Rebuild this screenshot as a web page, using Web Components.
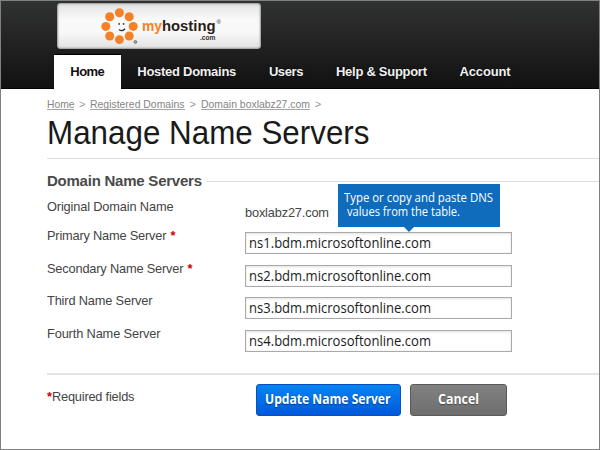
<!DOCTYPE html>
<html lang="en"><head><meta charset="utf-8"><title>Manage Name Servers</title>
<style>
html,body{margin:0;padding:0;background:#fff}
body{width:600px;height:450px;overflow:hidden;font-family:"Liberation Sans",Arial,sans-serif}
</style></head><body>
<hosting-app></hosting-app>
<script>
const define=(name,css,html,after)=>{
  const t=document.createElement('template');
  t.innerHTML=`<style>:host{display:block;box-sizing:border-box}*{box-sizing:border-box}${css}</style>${html}`;
  customElements.define(name,class extends HTMLElement{
    connectedCallback(){
      if(this.shadowRoot)return;
      this.attachShadow({mode:'open'}).append(t.content.cloneNode(true));
      if(after)after(this,this.shadowRoot);
    }
  });
};

/* Takes exactly the width in "w": by letter spacing, or by condensing the run if "condense" is set. */
define('fit-text',':host{display:inline-block;white-space:pre;flex:none}span{display:inline-block;white-space:pre;transform-origin:0 50%}','<span><slot></slot></span>',(el,root)=>{
  const s=root.querySelector('span'),w=+el.getAttribute('w'),nat=s.getBoundingClientRect().width;
  if(el.hasAttribute('condense'))s.style.transform=`scaleX(${w/nat})`;
  else s.style.letterSpacing=(w-nat)/(el.textContent.length-1)+'px';
  el.style.width=w+'px';
});

define('brand-logo',`:host{width:204px;height:46px;border-radius:3px;border:1px solid #aaa;background:linear-gradient(#e3e3e3,#f9f9f9 35%,#f8f8f8 65%,#e2e2e2);box-shadow:inset 0 0 2px #999;display:flex}
svg{margin:4px 0 0 43px;flex:none}
.word{font-weight:bold;font-size:15px;line-height:20px;margin:12px 0 0 3px;color:#2b1c17;white-space:nowrap;height:20px}
.my{color:#f58025}
.com{display:block;font-size:7px;line-height:8px;margin:-2px 0 0 58px;color:#333}
.r{font-size:6px;vertical-align:7px;font-weight:normal;margin-left:1px;line-height:0}`,
`<svg width="38" height="36" viewBox="0 0 38 36"><g fill="#f58025"><circle cx="18.4" cy="4.8" r="4.5"/><circle cx="28.2" cy="8.7" r="4.5"/><circle cx="32.2" cy="18.4" r="4.5"/><circle cx="28.2" cy="28" r="4.5"/><circle cx="18.4" cy="31.6" r="4.4"/><circle cx="8.7" cy="28" r="4.5"/><circle cx="4.8" cy="18.4" r="4.5"/><circle cx="8.7" cy="8.7" r="4.5"/></g><g fill="#333"><circle cx="18.2" cy="15.9" r=".9"/><circle cx="22.6" cy="15.9" r=".9"/></g><path d="M18 21.6q3 2.5 6-.9" fill="none" stroke="#333" stroke-width="1.3"/><circle cx="34.4" cy="34" r="1.4" fill="#aaa" stroke="#777"/></svg>
<div class="word"><fit-text condense class="my" w="20">my</fit-text><fit-text condense w="53.5">hosting</fit-text><span class="r">®</span><span class="com"><fit-text condense w="15.5">.com</fit-text></span></div>`);

define('nav-tab',`:host{height:34px;padding:0 16.3px;font-weight:bold;font-size:13px;line-height:34px;color:#f1f1f1;white-space:nowrap;text-shadow:0 0 2px #000}
:host([active]){background:#fff;color:#111;text-shadow:none;width:67px;box-shadow:0 -1px 0 #000}`,'<slot></slot>');

define('site-header',`:host{height:88px;padding:2px 0 0 56px;background:linear-gradient(#303231,#232323 45%,#111);border-bottom:1px solid #000}
nav{display:flex;margin:6px 0 0 -3px}`,`<brand-logo></brand-logo><nav><nav-tab active><fit-text w="34.5">Home</fit-text></nav-tab><nav-tab><fit-text w="99">Hosted Domains</fit-text></nav-tab><nav-tab><fit-text w="34.5">Users</fit-text></nav-tab><nav-tab><fit-text w="91">Help &amp; Support</fit-text></nav-tab><nav-tab><fit-text w="51">Account</fit-text></nav-tab></nav>`);

define('bread-crumbs',`:host{display:flex;height:20px;margin:5px 0 0 -.5px;font-size:11px;line-height:20px;color:#999;gap:4.9px}
a{display:block;height:16px;border-bottom:1px solid #a5a5a5;color:#858585}`,`<a><fit-text condense w="27.5">Home</fit-text></a><span>&gt;</span><a><fit-text condense w="94.5">Registered Domains</fit-text></a><span>&gt;</span><a><fit-text condense w="109">Domain boxlabz27.com</fit-text></a><span>&gt;</span>`);

define('section-title',`:host{display:flex;align-items:center;height:22px;font-size:15px;font-weight:bold;line-height:22px;color:#4a4a4a;gap:5px}
i{flex:1;height:1px;background:#ddd;margin-top:1px}`,'<slot></slot><i></i>');

define('text-field',`:host{width:267px;height:22px;border:1px solid #aaa;box-shadow:inset 0 0 1px #bbb,inset 0 2px 2px #f1f1f1;padding-left:3px;font:14.5px/20px "Open Sans",sans-serif;color:#1c1c1c}`,'<slot></slot>');

define('field-row',`:host{display:flex;height:32.5px;font-size:12.8px;line-height:15px;color:#444}
.l{width:198px;padding-top:2px;flex:none;white-space:nowrap}b{color:#c00;margin-left:4px}.v{padding-top:6px}
:host([plain]){height:34px;padding-top:5px}:host([plain]) .v{padding-top:8px}`,'<div class="l"><slot name="label"></slot></div><div class="v"><slot></slot></div>',(el,r)=>{
  if(el.hasAttribute('required')){const b=document.createElement('b');b.textContent='*';r.querySelector('.l').append(b);}
});

define('push-button',`:host{width:145px;height:32px;border:1px solid #0a4fc0;border-radius:3px;background:linear-gradient(#0583f0,#0059dc);font:700 14px/28px "Open Sans",sans-serif;color:#fff;text-align:center;text-shadow:0 1px 1px #0006;flex:none}
:host([muted]){width:97px;background:linear-gradient(#818181,#6e6e6e);border-color:#5a5a5a}`,'<slot></slot>');

define('call-out',`:host{position:absolute;left:337px;top:183px;width:162px;height:43px;background:#0f6cbd;color:#fff;font:12.5px/14px "Open Sans",sans-serif;padding:7px 0 0 6px}
:host::after{content:"";position:absolute;left:66px;top:43px;border:5px solid transparent;border-top-color:#0f6cbd;border-bottom:0}
.b{margin-left:3px}`,`<div><fit-text condense w="149">Type or copy and paste DNS</fit-text></div><div class="b"><fit-text condense w="113">values from the table.</fit-text></div>`);

define('hosting-app',`:host{position:relative;width:600px;height:450px;border:1px solid #808080;background:#fff;overflow:hidden}
main{padding-left:46px}
h1{margin:0;height:45px;font-size:32.5px;font-weight:normal;line-height:38px;color:#1a1a1a;border-bottom:1px solid #ddd}
section-title{margin-top:11px}
footer{display:flex;height:60px;margin-top:17px;border-top:2px solid #e4e4e4;padding-top:9px;font-size:12.8px;line-height:25px;color:#444}
.req{width:208.5px;display:flex;flex:none}.req b{color:#c00}push-button+push-button{margin-left:9.5px}`,
`<site-header></site-header><main><bread-crumbs></bread-crumbs><h1><fit-text condense w="322.5">Manage Name Servers</fit-text></h1>
<section-title><fit-text w="155">Domain Name Servers</fit-text></section-title>
<field-row plain><fit-text slot="label" w="126.5">Original Domain Name</fit-text><fit-text w="84">boxlabz27.com</fit-text></field-row>
<field-row required><fit-text slot="label" w="119.5">Primary Name Server</fit-text><text-field><fit-text condense w="182">ns1.bdm.microsoftonline.com</fit-text></text-field></field-row>
<field-row required><fit-text slot="label" w="136.5">Secondary Name Server</fit-text><text-field><fit-text condense w="182">ns2.bdm.microsoftonline.com</fit-text></text-field></field-row>
<field-row><fit-text slot="label" w="105.5">Third Name Server</fit-text><text-field><fit-text condense w="182">ns3.bdm.microsoftonline.com</fit-text></text-field></field-row>
<field-row><fit-text slot="label" w="113.5">Fourth Name Server</fit-text><text-field><fit-text condense w="182">ns4.bdm.microsoftonline.com</fit-text></text-field></field-row>
<footer><div class="req"><b>*</b><fit-text w="82.5">Required fields</fit-text></div><push-button><fit-text condense w="125.5">Update Name Server</fit-text></push-button><push-button muted><fit-text condense w="41">Cancel</fit-text></push-button></footer></main><call-out></call-out>`);
</script></body></html>
